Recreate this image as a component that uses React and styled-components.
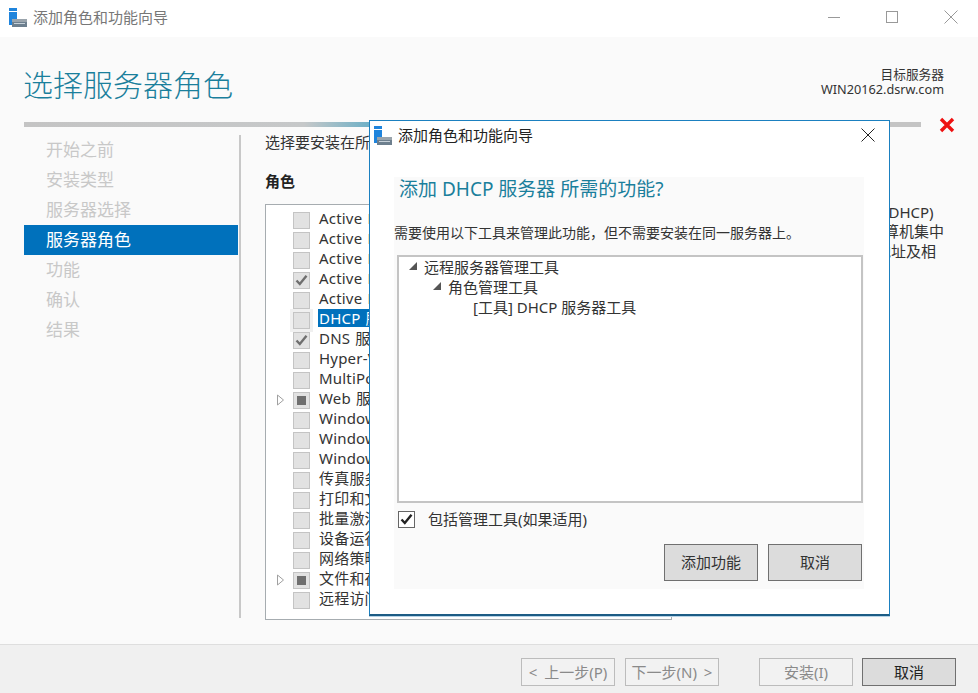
import React from 'react';
import styled, { createGlobalStyle } from 'styled-components';

const Global = createGlobalStyle`
  html, body { margin: 0; padding: 0; background: #fafafa; }
  body { font-family: "Noto Sans", "Noto Sans CJK SC", sans-serif; }
  * { box-sizing: border-box; }
`;

const Page = styled.div`
  position: relative;
  width: 978px;
  height: 693px;
  overflow: hidden;
  display: flex;
  flex-direction: column;
  background: #fafafa;
  color: #333;
`;

const TitleBar = styled.div`
  height: 37px;
  flex: none;
  background: #fff;
  display: flex;
  align-items: center;
  padding: 0 0 3px 8px;
`;
const TitleText = styled.span`
  margin: ${p => p.$active ? '-1px' : '0'} 0 0 6px;
  font-size: 15px;
  color: ${p => p.$active ? '#222' : '#777'};
  line-height: 20px;
`;
const WinButtons = styled.div`
  margin-left: auto;
  display: flex;
  align-items: center;
  gap: 46px;
  padding-right: 20px;
`;

const Header = styled.div`
  height: 85px;
  flex: none;
  padding: 0 34px 0 23px;
  display: flex;
  justify-content: space-between;
`;
const Heading = styled.h1`
  margin: 26px 0 0;
  font-size: 30px;
  font-weight: 300;
  line-height: 44px;
  color: #1a7f9c;
`;
const Target = styled.div`
  margin-top: 30px;
  text-align: right;
  font-size: 12.7px;
  line-height: 15px;
  color: #333;
`;

const RuleRow = styled.div`
  height: 5px;
  flex: none;
  display: flex;
  align-items: center;
  padding-left: 24px;
`;
const Rule = styled.div`
  width: 897px;
  height: 5px;
  background: linear-gradient(90deg, #c4c4c4 0, #c6c8c9 280px, #6fb0c6 345px, #c4c4c4 346px);
`;
const RedMark = styled.svg`
  position: absolute;
  left: 939px;
  top: 117px;
`;

const Body = styled.div`
  flex: 1;
  display: flex;
  padding: 8px 0 0 24px;
  min-height: 0;
`;
const Steps = styled.nav`
  width: 214px;
  flex: none;
`;
const Step = styled.div`
  height: 30px;
  padding-left: 22px;
  font-size: 17px;
  line-height: 30px;
  color: ${p => p.$active ? '#fff' : '#c8c8c8'};
  background: ${p => p.$active ? '#0071bc' : 'transparent'};
`;
const Divider = styled.div`
  width: 2px;
  height: 483px;
  margin-left: 1px;
  flex: none;
  background: #c8c8c8;
`;
const Main = styled.div`
  width: 407px;
  margin-left: 24px;
  flex: none;
`;
const Intro = styled.div`
  font-size: 15px;
  line-height: 14px;
  white-space: nowrap;
  color: #333;
`;
const RolesLabel = styled.div`
  margin-top: 22px;
  font-size: 15px;
  font-weight: 700;
  line-height: 20px;
  color: #222;
`;
const RoleBox = styled.div`
  margin-top: 13px;
  height: 416px;
  padding-top: 5px;
  background: #fff;
  border: 1px solid #a6acb0;
`;
const RoleRow = styled.div`
  height: 20px;
  display: flex;
  align-items: center;
  white-space: nowrap;
  font-size: 15px;
  color: #333;
`;
const Arrow = styled.svg`
  width: 27px;
  padding-left: 11px;
  flex: none;
`;
const RoleCheck = styled.span`
  width: 17px;
  height: 17px;
  flex: none;
  display: flex;
  align-items: center;
  justify-content: center;
  background: #e2e2e2;
  border: 1px solid #c4c4c4;
  outline: ${p => p.$focus ? '3px solid #f0f0f0' : 'none'};
`;
const PartMark = styled.span`
  width: 9px;
  height: 9px;
  background: #6f6f6f;
`;
const RoleName = styled.span`
  margin: 0 0 5px 8px;
  padding: 0 1px;
  line-height: 18px;
  letter-spacing: 0.2px;
  word-spacing: 1px;
  color: ${p => p.$selected ? '#fff' : '#333'};
  background: ${p => p.$selected ? '#0071bc' : 'transparent'};
`;

const Describe = styled.div`
  margin: 68px 0 0 32px;
  font-size: 15px;
  line-height: 19.4px;
  white-space: nowrap;
  color: #333;
`;

const Footer = styled.div`
  position: absolute;
  left: 0;
  right: 0;
  bottom: 0;
  height: 49px;
  background: #f0f0f0;
  border-top: 1px solid #dedede;
  display: flex;
  align-items: flex-start;
  padding: 13px 22px 0 521px;
`;
const FootButton = styled.div`
  width: 94px;
  height: 28px;
  margin-left: ${p => p.$gap || 0}px;
  flex: none;
  font-size: 15px;
  line-height: 26px;
  word-spacing: 3px;
  text-align: center;
  color: ${p => p.$on ? '#222' : '#8a8a8a'};
  background: ${p => p.$on ? '#dcdcdc' : '#f2f2f2'};
  border: 1px solid ${p => p.$on ? '#707070' : '#bcbcbc'};
`;

const Dialog = styled.div`
  position: absolute;
  left: 369px;
  top: 120px;
  width: 521px;
  height: 496px;
  background: #fff;
  border: 1px solid #1b80c0;
  border-bottom: 2px solid #1c5c85;
  box-shadow: 0 1px 0 #b6d3e6;
  display: flex;
  flex-direction: column;
`;
const DialogBar = styled.div`
  height: 28px;
  flex: none;
  padding-left: 3px;
  display: flex;
  align-items: center;
`;
const DialogClose = styled.svg`
  margin-left: auto;
  margin-right: 14px;
`;
const DialogPanel = styled.div`
  width: 470px;
  height: 412px;
  margin: 28px 0 0 24px;
  background: #fafafa;
`;
const DialogHead = styled.h2`
  margin: 0;
  padding: 0 0 0 5px;
  font-size: 19px;
  font-weight: 400;
  line-height: 24px;
  color: #1a7f9c;
`;
const DialogText = styled.p`
  margin: 22px 0 0;
  font-size: 14px;
  line-height: 20px;
  white-space: nowrap;
  color: #333;
`;
const Tree = styled.div`
  width: 466px;
  height: 248px;
  margin: 12px 0 0 3px;
  background: #fff;
  border: 2px solid #c4c4c4;
`;
const TreeRow = styled.div`
  height: 20px;
  padding: 0 0 2px ${p => p.$indent}px;
  display: flex;
  align-items: center;
  gap: 6px;
  font-size: 15px;
  color: #333;
`;
const Include = styled.label`
  margin: 7px 0 0 4px;
  display: flex;
  align-items: center;
  font-size: 15px;
  color: #333;
  line-height: 18px;
`;
const IncludeBox = styled.span`
  width: 17px;
  height: 17px;
  margin-right: 13px;
  flex: none;
  display: flex;
  align-items: center;
  justify-content: center;
  background: #fff;
  border: 1px solid #666;
`;
const DialogActions = styled.div`
  margin: 16px 0 0;
  padding-right: 2px;
  display: flex;
  justify-content: flex-end;
  gap: 10px;
`;
const DialogButton = styled.div`
  width: 94px;
  height: 37px;
  font-size: 15px;
  line-height: 35px;
  text-align: center;
  color: #333;
  background: #dcdcdc;
  border: 1px solid #707070;
`;

function ServerIcon() {
  return (
    <svg width="19" height="19" viewBox="0 0 19 19">
      <rect x="1" y="0" width="8" height="3" fill="#1f84dc" />
      <rect x="1" y="4" width="8" height="13" fill="#1f84dc" />
      <rect x="4" y="11" width="15" height="3" fill="#9aa4ac" />
      <rect x="4" y="14" width="15" height="5" fill="#6d7f8e" />
      <rect x="6" y="15" width="11" height="1" fill="#c6d0d8" />
    </svg>
  );
}

function Tick({ color }) {
  return (
    <svg width="13" height="12" viewBox="0 0 13 12">
      <path d="M1.5 6.5 L4.8 10 L11.5 1.8" fill="none" stroke={color} strokeWidth="2.4" />
    </svg>
  );
}

function TreeCaret() {
  return (
    <svg width="10" height="10" viewBox="0 0 10 10" style={{ flex: 'none' }}>
      <path d="M1 9 L9 1 V9 Z" fill="#555" />
    </svg>
  );
}

const steps = ['开始之前', '安装类型', '服务器选择', '服务器角色', '功能', '确认', '结果'];

const roles = [
  { name: 'Active Directory Rights Management Services' },
  { name: 'Active Directory 联合身份验证服务' },
  { name: 'Active Directory 轻型目录服务' },
  { name: 'Active Directory 域服务', mark: 'tick' },
  { name: 'Active Directory 证书服务' },
  { name: 'DHCP 服务器', selected: true },
  { name: 'DNS 服务器', mark: 'tick' },
  { name: 'Hyper-V' },
  { name: 'MultiPoint Services' },
  { name: 'Web 服务器(IIS)', mark: 'part', more: true },
  { name: 'Windows Server Essentials 体验' },
  { name: 'Windows Server 更新服务' },
  { name: 'Windows 部署服务' },
  { name: '传真服务器' },
  { name: '打印和文件服务' },
  { name: '批量激活服务' },
  { name: '设备运行状况证明' },
  { name: '网络策略和访问服务' },
  { name: '文件和存储服务', mark: 'part', more: true },
  { name: '远程访问' },
];

export default function App() {
  return (
    <Page>
      <Global />
      <TitleBar>
        <ServerIcon />
        <TitleText>添加角色和功能向导</TitleText>
        <WinButtons>
          <svg width="12" height="12" viewBox="0 0 12 12"><path d="M0 6.5H12" stroke="#999" /></svg>
          <svg width="12" height="12" viewBox="0 0 12 12"><rect x=".5" y=".5" width="11" height="11" fill="none" stroke="#999" /></svg>
          <svg width="14" height="14" viewBox="0 0 14 14"><path d="M.5 .5L13.5 13.5M13.5 .5L.5 13.5" stroke="#999" /></svg>
        </WinButtons>
      </TitleBar>

      <Header>
        <Heading>选择服务器角色</Heading>
        <Target>
          <div>目标服务器</div>
          <div>WIN20162.dsrw.com</div>
        </Target>
      </Header>

      <RuleRow><Rule /></RuleRow>
      <RedMark width="16" height="16" viewBox="0 0 16 16">
        <path d="M2 2L14 14M14 2L2 14" stroke="#ee1111" strokeWidth="3.4" />
      </RedMark>

      <Body>
        <Steps>
          {steps.map(s => <Step key={s} $active={s === '服务器角色'}>{s}</Step>)}
        </Steps>
        <Divider />
        <Main>
          <Intro>选择要安装在所选服务器上的一个或多个角色。</Intro>
          <RolesLabel>角色</RolesLabel>
          <RoleBox>
            {roles.map(r => (
              <RoleRow key={r.name}>
                <Arrow height="12" viewBox="0 0 16 12">
                  {r.more && <path d="M.5 1 L6.5 6 L.5 11 Z" fill="#fff" stroke="#a0a0a0" />}
                </Arrow>
                <RoleCheck $focus={r.selected}>
                  {r.mark === 'tick' && <Tick color="#6f6f6f" />}
                  {r.mark === 'part' && <PartMark />}
                </RoleCheck>
                <RoleName $selected={r.selected}>{r.name}</RoleName>
              </RoleRow>
            ))}
          </RoleBox>
        </Main>
        <Describe>
          <div>动态主机配置协议的服务器(DHCP)</div>
          <div>服务器可为你的网络中的计算机集中</div>
          <div>配置并分配临时的动态 IP 地址及相</div>
        </Describe>
      </Body>

      <Footer>
        <FootButton>&lt; 上一步(P)</FootButton>
        <FootButton $gap={10}>下一步(N) &gt;</FootButton>
        <FootButton $gap={40}>安装(I)</FootButton>
        <FootButton $gap={9} $on>取消</FootButton>
      </Footer>

      <Dialog>
        <DialogBar>
          <ServerIcon />
          <TitleText $active>添加角色和功能向导</TitleText>
          <DialogClose width="14" height="14" viewBox="0 0 14 14">
            <path d="M.5 .5L13.5 13.5M13.5 .5L.5 13.5" stroke="#222" />
          </DialogClose>
        </DialogBar>
        <DialogPanel>
          <DialogHead>添加 DHCP 服务器 所需的功能?</DialogHead>
          <DialogText>需要使用以下工具来管理此功能，但不需要安装在同一服务器上。</DialogText>
          <Tree>
            <TreeRow $indent={9}><TreeCaret />远程服务器管理工具</TreeRow>
            <TreeRow $indent={33}><TreeCaret />角色管理工具</TreeRow>
            <TreeRow $indent={74}>[工具] DHCP 服务器工具</TreeRow>
          </Tree>
          <Include>
            <IncludeBox><Tick color="#222" /></IncludeBox>
            包括管理工具(如果适用)
          </Include>
          <DialogActions>
            <DialogButton>添加功能</DialogButton>
            <DialogButton>取消</DialogButton>
          </DialogActions>
        </DialogPanel>
      </Dialog>
    </Page>
  );
}
